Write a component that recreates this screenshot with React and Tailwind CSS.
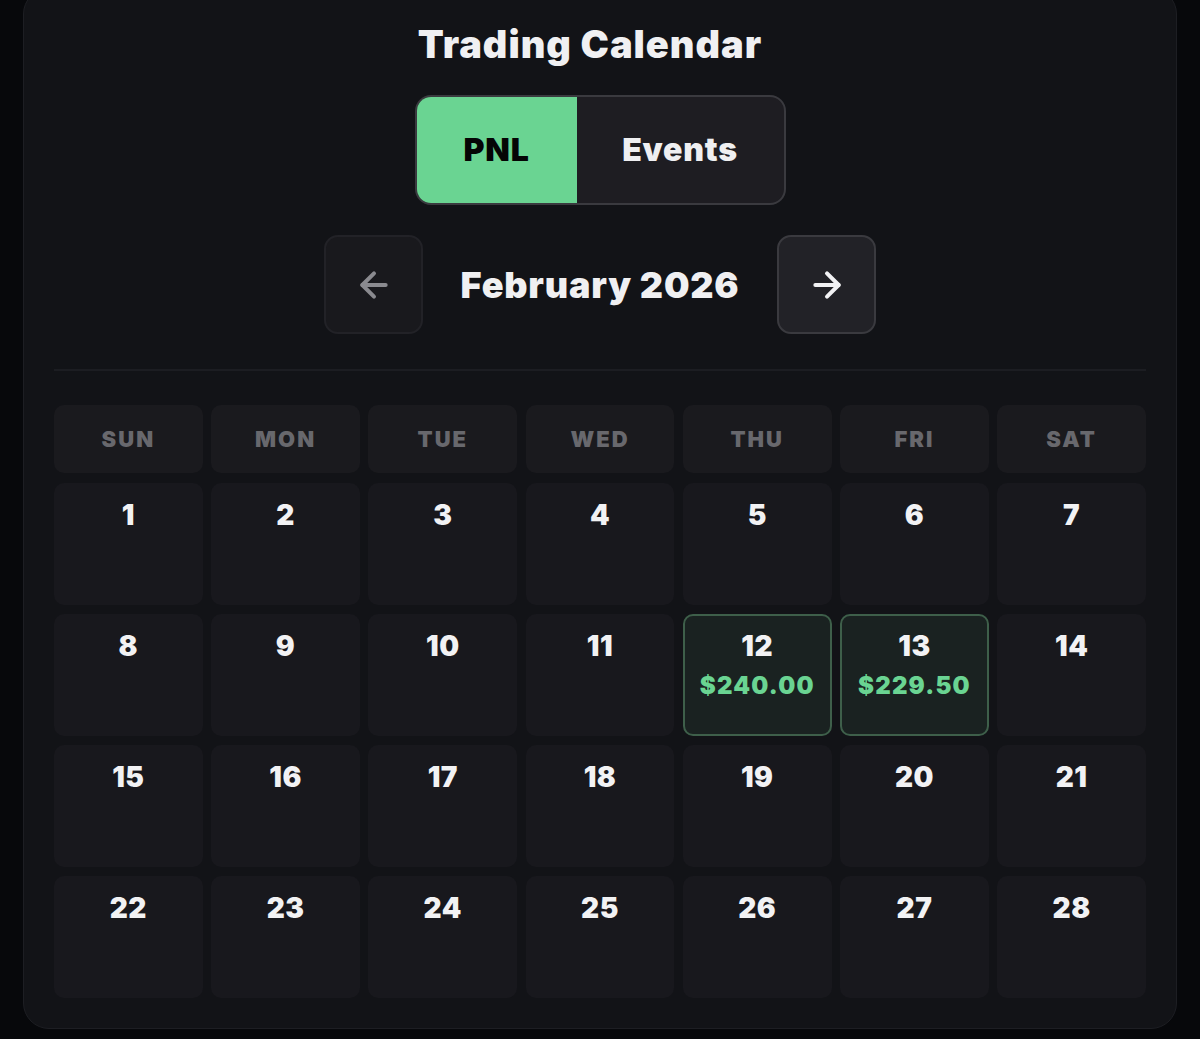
import React from 'react';

const DAYS = ['SUN', 'MON', 'TUE', 'WED', 'THU', 'FRI', 'SAT'];
const PNL = { 12: '$240.00', 13: '$229.50' };

const ArrowLeft = ({ className }) => (
  <svg viewBox="0 0 24 24" className={className} fill="none" stroke="currentColor" strokeWidth="2.4" strokeLinecap="round" strokeLinejoin="round">
    <path d="M19 12H5" />
    <path d="M12 19l-7-7 7-7" />
  </svg>
);

const ArrowRight = ({ className }) => (
  <svg viewBox="0 0 24 24" className={className} fill="none" stroke="currentColor" strokeWidth="2.4" strokeLinecap="round" strokeLinejoin="round">
    <path d="M5 12h14" />
    <path d="M12 5l7 7-7 7" />
  </svg>
);

const DayCell = ({ day }) => {
  const pnl = PNL[day];
  if (pnl) {
    return (
      <div className="h-[122px] rounded-[10px] border-2 border-[#3e5f4a] bg-[#1a2221] flex flex-col items-center pt-[12px]">
        <span className="text-[28px] leading-[36px] font-black tracking-[0.5px] text-[#f2f2f4]">{day}</span>
        <span className="text-[24px] leading-[32px] font-black text-[#6ad492] mt-[6px] tracking-[1.2px]">{pnl}</span>
      </div>
    );
  }
  return (
    <div className="h-[122px] rounded-[10px] bg-[#18181d] flex flex-col items-center pt-[14px]">
      <span className="text-[28px] leading-[36px] font-black tracking-[0.5px] text-[#f2f2f4]">{day}</span>
    </div>
  );
};

export default function App() {
  const days = Array.from({ length: 28 }, (_, i) => i + 1);
  return (
    <div className="min-h-[1039px] bg-[#07080b] px-[23px] overflow-hidden" style={{ fontFamily: 'Inter, "Noto Sans", sans-serif' }}>
      <div className="-mt-[12px] rounded-[26px] border border-[#1d1e23] bg-[#121317] px-[30px] pt-[35px] pb-[30px]">
        <h1 className="pr-[20px] text-center text-[38px] leading-[40px] font-black tracking-[1px] text-[#f0f0f2]">Trading Calendar</h1>

        <div className="mt-[31px] flex justify-center">
          <div className="flex h-[110px] w-[371px] overflow-hidden rounded-[16px] border-2 border-[#3a3a3f] bg-[#1e1d22]">
            <div className="flex w-[160px] items-center justify-center bg-[#6ad492] text-[32px] font-black tracking-[0.8px] text-[#050505]">PNL</div>
            <div className="flex flex-1 items-center justify-center text-[32px] font-black tracking-[0.8px] text-[#efeff1]">Events</div>
          </div>
        </div>

        <div className="mt-[30px] flex items-center justify-center gap-[34px]">
          <button className="flex h-[99px] w-[99px] items-center justify-center rounded-[14px] border-2 border-[#222227] bg-[#19191d] text-[#8a8a8f]">
            <ArrowLeft className="h-[40px] w-[40px]" />
          </button>
          <span className="w-[286px] text-center text-[36px] font-black tracking-[0.8px] text-[#f0f0f2]">February 2026</span>
          <button className="flex h-[99px] w-[99px] items-center justify-center rounded-[14px] border-2 border-[#3a3a3f] bg-[#222227] text-[#f2f2f4]">
            <ArrowRight className="h-[40px] w-[40px]" />
          </button>
        </div>

        <div className="mt-[35px] h-[2px] bg-[#1c1d22]" />

        <div className="mt-[34px] grid grid-cols-7 gap-x-[8.5px]">
          {DAYS.map((d) => (
            <div key={d} className="flex h-[68px] items-center justify-center rounded-[10px] bg-[#1a1a1e] text-[22px] font-black tracking-[2px] text-[#68686d]">
              {d}
            </div>
          ))}
        </div>

        <div className="mt-[10px] grid grid-cols-7 gap-x-[8.5px] gap-y-[9px]">
          {days.map((d) => (
            <DayCell key={d} day={d} />
          ))}
        </div>
      </div>
    </div>
  );
}
